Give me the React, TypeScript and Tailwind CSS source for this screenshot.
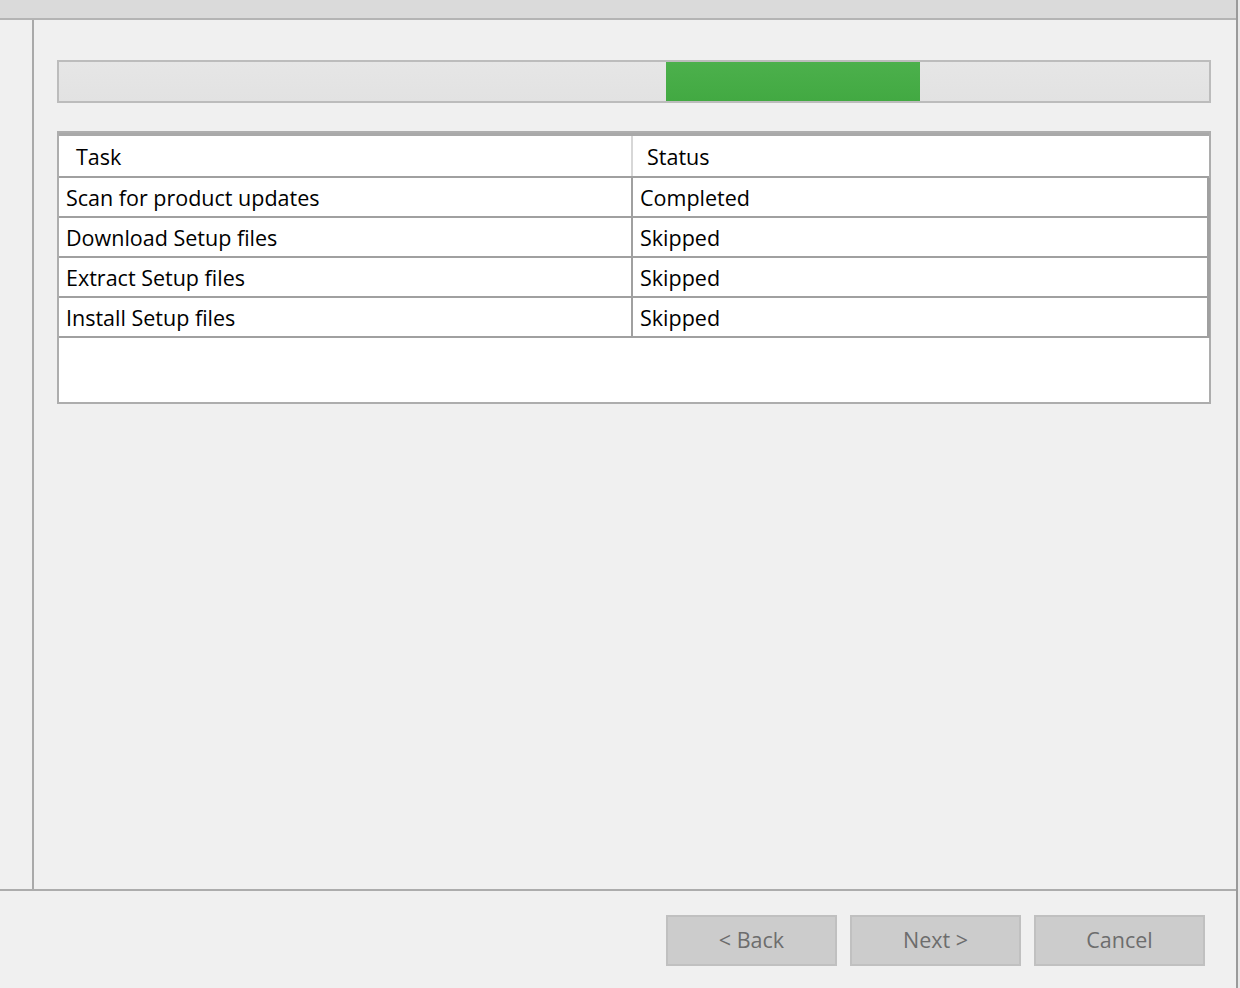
const rows = [
  ["Scan for product updates", "Completed"],
  ["Download Setup files", "Skipped"],
  ["Extract Setup files", "Skipped"],
  ["Install Setup files", "Skipped"],
];

export default function App() {
  return (
    <div
      className="w-[1240px] h-[988px] flex bg-[#f0f0f0] overflow-hidden text-[#000]"
      style={{ fontFamily: '"Open Sans", "Noto Sans", sans-serif' }}
    >
      <div className="w-[1236px] flex flex-col">
        <div className="h-[20px] bg-[#dadada] border-b-2 border-[#b4b4b4] shrink-0" />
        <div className="flex h-[871px] border-b-2 border-[#acacac] shrink-0">
          <div className="w-[34px] border-r-2 border-[#a9a9a9] shrink-0" />
          <div className="flex-1 pl-[23px] pr-[25px] pt-[40px]">
            <div className="h-[43px] border-2 border-[#bcbcbc] bg-gradient-to-b from-[#e6e6e6] to-[#e2e2e2] flex">
              <div className="w-[607px]" />
              <div className="w-[254px] bg-gradient-to-b from-[#4cb04c] to-[#42a942]" />
            </div>
            <div className="mt-[28px] h-[273px] border-2 border-[#adadad] bg-white">
              <div className="border-t-[3px] border-[#a9a9a9] w-full" />
              <div className="flex h-[42px] items-center border-b-2 border-[#a0a0a0] text-[21.5px] bg-white">
                <div className="w-[574px] pl-[17px] border-r-2 border-[#d7d7d7] h-full flex items-center pt-[2px]">Task</div>
                <div className="pl-[14px] pt-[2px]">Status</div>
              </div>
              {rows.map(([t, s]) => (
                <div key={t} className="flex h-[40px] items-center border-b-2 border-r-[3px] border-[#a0a0a0] text-[21.5px] mr-[-1px]">
                  <div className="w-[574px] pl-[7px] border-r-2 border-[#a0a0a0] h-full flex items-center pt-[2px]">{t}</div>
                  <div className="pl-[7px] pt-[2px]">{s}</div>
                </div>
              ))}
            </div>
          </div>
        </div>
        <div className="flex justify-end gap-[13px] pr-[31px] pt-[24px]">
          {["< Back", "Next >", "Cancel"].map((b) => (
            <div
              key={b}
              className="w-[171px] h-[51px] bg-[#cccccc] border-2 border-[#c0c0c0] flex items-center justify-center text-[21.5px] text-[#6d6d6d]"
            >
              {b}
            </div>
          ))}
        </div>
      </div>
      <div className="w-[4px] bg-[#e8e8e8] border-l-2 border-[#9a9a9a]" />
    </div>
  );
}
